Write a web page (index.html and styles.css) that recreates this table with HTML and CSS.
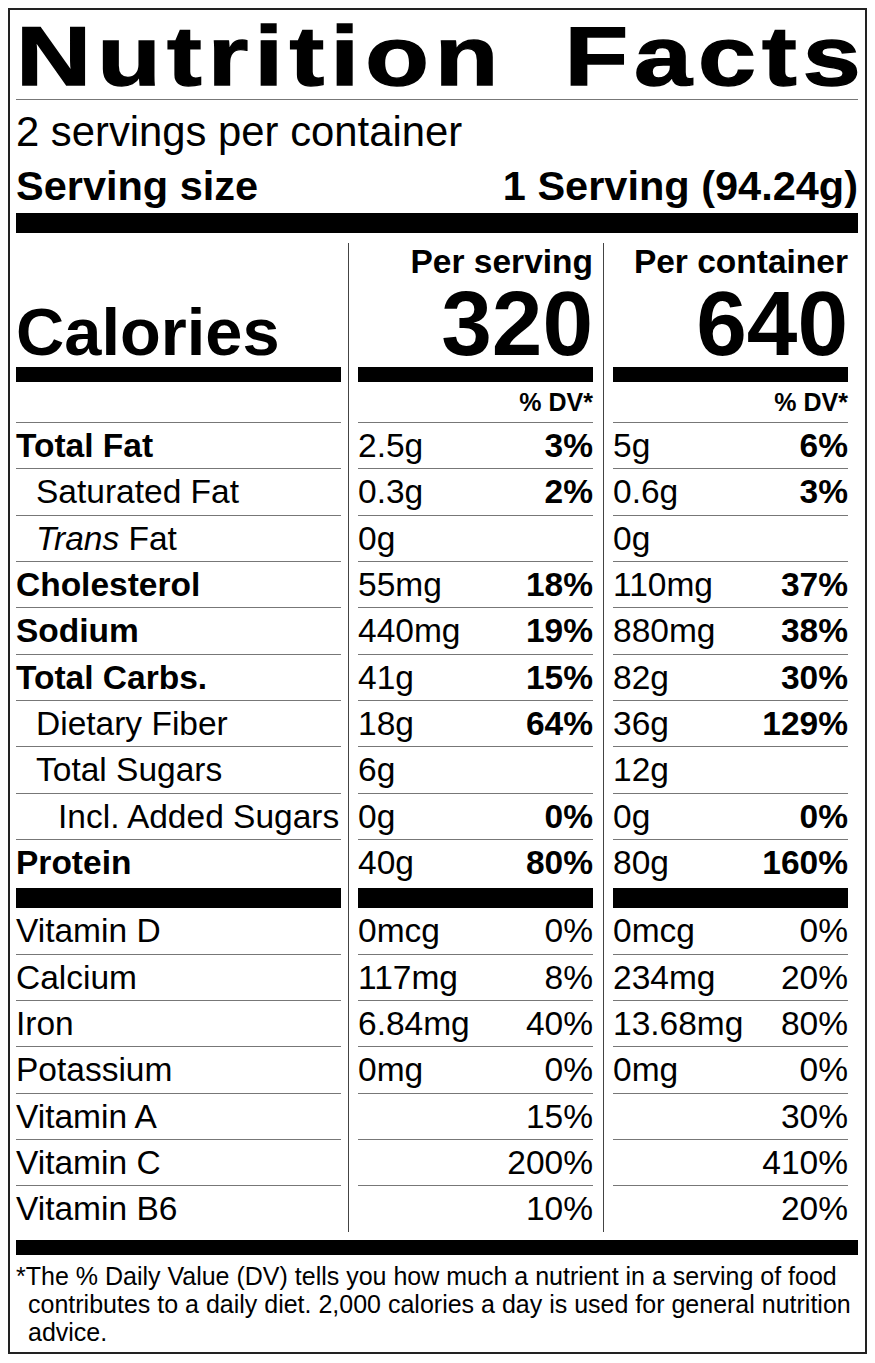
FILE: index.html
```html
<!DOCTYPE html>
<html lang="en">
<head>
<meta charset="utf-8">
<title>Nutrition Facts</title>
<link rel="stylesheet" href="styles.css">
</head>
<body>
<div class="label">
  <h1 class="title"><span class="title-text">Nutrition Facts</span></h1>
  <div class="servings">2 servings per container</div>
  <div class="serving-size"><span>Serving size</span><span>1 Serving (94.24g)</span></div>
  <div class="bar bar-20"></div>

  <div class="grid">
    <div class="c c1 cal-label"><span class="calories">Calories</span></div>
    <div class="c c2 cal-head"><div class="per">Per serving</div><div class="kcal">320</div></div>
    <div class="c c3 cal-head"><div class="per">Per container</div><div class="kcal">640</div></div>

    <div class="c c1"><div class="bar bar-15"></div></div>
    <div class="c c2"><div class="bar bar-15"></div></div>
    <div class="c c3"><div class="bar bar-15"></div></div>

    <div class="c c1"><div class="in dv"></div></div>
    <div class="c c2"><div class="in dv"><span></span><b>% DV*</b></div></div>
    <div class="c c3"><div class="in dv"><span></span><b>% DV*</b></div></div>

    <div class="c c1"><div class="in"><b>Total Fat</b></div></div>
    <div class="c c2"><div class="in"><span>2.5g</span><b>3%</b></div></div>
    <div class="c c3"><div class="in"><span>5g</span><b>6%</b></div></div>

    <div class="c c1"><div class="in ind1">Saturated Fat</div></div>
    <div class="c c2"><div class="in"><span>0.3g</span><b>2%</b></div></div>
    <div class="c c3"><div class="in"><span>0.6g</span><b>3%</b></div></div>

    <div class="c c1"><div class="in ind1"><span><i>Trans</i> Fat</span></div></div>
    <div class="c c2"><div class="in"><span>0g</span></div></div>
    <div class="c c3"><div class="in"><span>0g</span></div></div>

    <div class="c c1"><div class="in"><b>Cholesterol</b></div></div>
    <div class="c c2"><div class="in"><span>55mg</span><b>18%</b></div></div>
    <div class="c c3"><div class="in"><span>110mg</span><b>37%</b></div></div>

    <div class="c c1"><div class="in"><b>Sodium</b></div></div>
    <div class="c c2"><div class="in"><span>440mg</span><b>19%</b></div></div>
    <div class="c c3"><div class="in"><span>880mg</span><b>38%</b></div></div>

    <div class="c c1"><div class="in"><b>Total Carbs.</b></div></div>
    <div class="c c2"><div class="in"><span>41g</span><b>15%</b></div></div>
    <div class="c c3"><div class="in"><span>82g</span><b>30%</b></div></div>

    <div class="c c1"><div class="in ind1">Dietary Fiber</div></div>
    <div class="c c2"><div class="in"><span>18g</span><b>64%</b></div></div>
    <div class="c c3"><div class="in"><span>36g</span><b>129%</b></div></div>

    <div class="c c1"><div class="in ind1">Total Sugars</div></div>
    <div class="c c2"><div class="in"><span>6g</span></div></div>
    <div class="c c3"><div class="in"><span>12g</span></div></div>

    <div class="c c1"><div class="in ind2">Incl. Added Sugars</div></div>
    <div class="c c2"><div class="in"><span>0g</span><b>0%</b></div></div>
    <div class="c c3"><div class="in"><span>0g</span><b>0%</b></div></div>

    <div class="c c1"><div class="in last"><b>Protein</b></div></div>
    <div class="c c2"><div class="in last"><span>40g</span><b>80%</b></div></div>
    <div class="c c3"><div class="in last"><span>80g</span><b>160%</b></div></div>

    <div class="c c1"><div class="bar bar-20 mid"></div></div>
    <div class="c c2"><div class="bar bar-20 mid"></div></div>
    <div class="c c3"><div class="bar bar-20 mid"></div></div>

    <div class="c c1"><div class="in">Vitamin D</div></div>
    <div class="c c2"><div class="in"><span>0mcg</span><span>0%</span></div></div>
    <div class="c c3"><div class="in"><span>0mcg</span><span>0%</span></div></div>

    <div class="c c1"><div class="in">Calcium</div></div>
    <div class="c c2"><div class="in"><span>117mg</span><span>8%</span></div></div>
    <div class="c c3"><div class="in"><span>234mg</span><span>20%</span></div></div>

    <div class="c c1"><div class="in">Iron</div></div>
    <div class="c c2"><div class="in"><span>6.84mg</span><span>40%</span></div></div>
    <div class="c c3"><div class="in"><span>13.68mg</span><span>80%</span></div></div>

    <div class="c c1"><div class="in">Potassium</div></div>
    <div class="c c2"><div class="in"><span>0mg</span><span>0%</span></div></div>
    <div class="c c3"><div class="in"><span>0mg</span><span>0%</span></div></div>

    <div class="c c1"><div class="in">Vitamin A</div></div>
    <div class="c c2"><div class="in"><span></span><span>15%</span></div></div>
    <div class="c c3"><div class="in"><span></span><span>30%</span></div></div>

    <div class="c c1"><div class="in">Vitamin C</div></div>
    <div class="c c2"><div class="in"><span></span><span>200%</span></div></div>
    <div class="c c3"><div class="in"><span></span><span>410%</span></div></div>

    <div class="c c1"><div class="in last">Vitamin B6</div></div>
    <div class="c c2"><div class="in last"><span></span><span>10%</span></div></div>
    <div class="c c3"><div class="in last"><span></span><span>20%</span></div></div>
  </div>

  <div class="bar bar-15 foot-bar"></div>
  <p class="footnote">*The % Daily Value (DV) tells you how much a nutrient in a serving of food contributes to a daily diet. 2,000 calories a day is used for general nutrition advice.</p>
</div>
</body>
</html>
```
FILE: styles.css
```css
html, body {
  background: #fff;
}
body {
  margin: 8px;
  font-family: "Liberation Sans", Arial, sans-serif;
  color: #000;
}
.label {
  border: 2px solid #222;
  padding: 4px 7px 6px 6px;
}
.title {
  margin: 0;
  font-size: 84px;
  font-weight: 700;
  line-height: 85px;
  white-space: nowrap;
  border-bottom: 1px solid #777;
}
.title-text {
  display: inline-block;
  letter-spacing: 4.9px;
  word-spacing: 20px;
  margin-right: -4.9px;
  -webkit-text-stroke: 1.4px #000;
  transform: scaleX(1.24);
  transform-origin: 0 50%;
}
.servings {
  margin-top: 5px;
  font-size: 41.8px;
  line-height: 54px;
}
.serving-size {
  display: flex;
  justify-content: space-between;
  font-size: 41.5px;
  font-weight: 700;
  line-height: 54px;
}
.bar {
  background: #000;
}
.bar-20 { height: 20px; }
.bar-15 { height: 15px; }
.bar.mid { margin-top: 3px; }

.grid {
  display: grid;
  grid-template-columns: 332px 255px 255px;
  margin-top: 10px;
}
.c1 { padding-right: 7px; }
.c2, .c3 {
  border-left: 1px solid #444;
  padding-left: 9px;
  padding-right: 10px;
}
.cal-label {
  display: flex;
  align-items: flex-end;
}
.calories {
  font-size: 66.8px;
  font-weight: 700;
  line-height: 70px;
}
.cal-head {
  text-align: right;
  font-weight: 700;
}
.per {
  font-size: 33.5px;
  line-height: 38px;
}
.kcal {
  font-size: 91px;
  line-height: 86px;
}
.in {
  display: flex;
  justify-content: space-between;
  height: 45.33px;
  line-height: 45.33px;
  font-size: 33.5px;
  white-space: nowrap;
  border-bottom: 1px solid #777;
}
.in.last {
  border-bottom: 0;
}
.in.dv {
  height: 40px;
  line-height: 40px;
  font-size: 25px;
}
.ind1 { padding-left: 20px; }
.ind2 { padding-left: 42px; }
.foot-bar {
  margin-top: 8px;
}
.footnote {
  margin: 7px 0 0;
  padding-left: 12px;
  text-indent: -12px;
  font-size: 25px;
  line-height: 28px;
}
```
